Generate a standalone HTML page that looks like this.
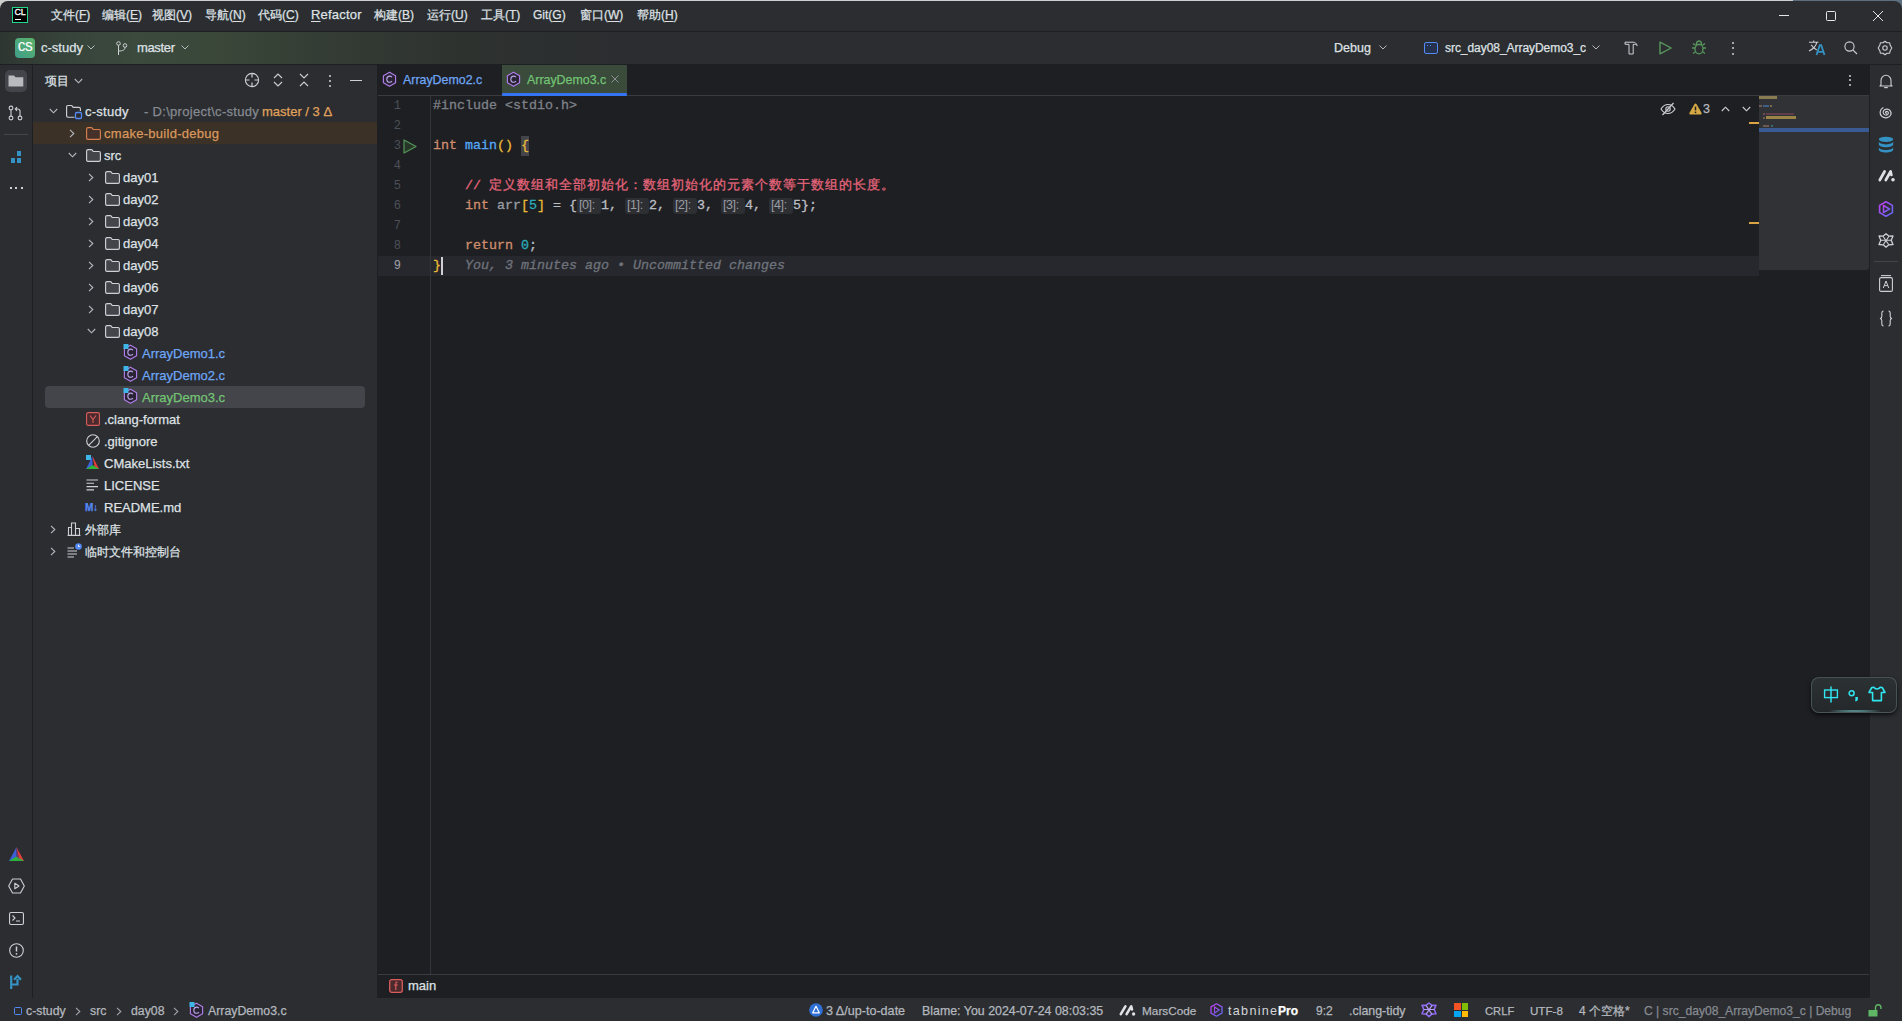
<!DOCTYPE html>
<html><head><meta charset="utf-8">
<style>
*{margin:0;padding:0;box-sizing:border-box}
html,body{width:1902px;height:1021px;overflow:hidden;background:#2b2d30;font-family:"Liberation Sans",sans-serif;color:#dfe1e5;font-size:13px}
.a{position:absolute}
.t{position:absolute;white-space:nowrap;line-height:22px;height:22px;-webkit-text-stroke:0.25px currentColor}
svg{position:absolute;overflow:visible}
#topline{left:0;top:0;width:1902px;height:8px;background:linear-gradient(90deg,#cfcfcf 0,#cfcfcf 1793px,#5d6e7e 1793px)}
#title{left:0;top:1px;width:1902px;height:30px;background:#2b2d30;border-top-left-radius:8px;border-top-right-radius:8px}
#tb{left:0;top:32px;width:1902px;height:32px;background:#2b2d30}
#tbgrad{left:0;top:32px;width:900px;height:32px;background:linear-gradient(90deg,#2f3631 0px,#36433a 60px,#3b4a3d 140px,#394638 230px,#333b34 340px,#2e322f 460px,#2b2d30 620px)}
.hl{background:#1e1f22}
#lstrip{left:0;top:65px;width:32px;height:933px;background:#2b2d30}
#proj{left:33px;top:65px;width:344px;height:933px;background:#2b2d30}
#editor{left:377px;top:65px;width:1492px;height:933px;background:#1e1f22}
#rstrip{left:1870px;top:65px;width:32px;height:933px;background:#2b2d30}
#status{left:0;top:998px;width:1902px;height:23px;background:#2b2d30}
.menu{top:4px;line-height:22px;font-size:12px;color:#dfe1e5}
.menu u{text-decoration:underline;text-underline-offset:2px}
.code{position:absolute;font-family:"Liberation Mono",monospace;font-size:13.33px;line-height:20px;white-space:pre;-webkit-text-stroke:0.3px currentColor}
.ln{position:absolute;font-family:"Liberation Mono",monospace;font-size:12px;line-height:20px;color:#4b5059;text-align:right;width:30px;left:371px}
</style></head><body>
<div class="a" id="topline"></div>
<div class="a" id="title"></div>
<div class="a hl" style="left:0;top:31px;width:1902px;height:1px"></div>
<div class="a" id="tb"></div>
<div class="a" id="tbgrad"></div>
<div class="a hl" style="left:0;top:64px;width:1902px;height:1px"></div>
<div class="a" id="lstrip"></div>
<div class="a hl" style="left:32px;top:65px;width:1px;height:933px"></div>
<div class="a" id="proj"></div>
<div class="a" id="editor"></div>
<div class="a hl" style="left:1869px;top:65px;width:1px;height:933px"></div>
<div class="a" id="rstrip"></div>
<div class="a" id="status"></div>

<!-- TITLE -->
<div id="titlec">
<div class="a" style="left:12px;top:7px;width:16px;height:16px;background:#000;border:1.5px solid #21d789"></div>
<div class="a" style="left:14.5px;top:7px;font:9px/11px 'Liberation Sans',sans-serif;color:#fff;letter-spacing:-0.2px;-webkit-text-stroke:0.3px #fff">CL</div>
<div class="a" style="left:15px;top:19px;width:6px;height:1px;background:#fff"></div>
<div class="t menu" style="left:51px">文件(<u>F</u>)</div>
<div class="t menu" style="left:102px">编辑(<u>E</u>)</div>
<div class="t menu" style="left:152px">视图(<u>V</u>)</div>
<div class="t menu" style="left:205px">导航(<u>N</u>)</div>
<div class="t menu" style="left:258px">代码(<u>C</u>)</div>
<div class="t menu" style="left:311px;font-size:13px;letter-spacing:0.2px"><u>R</u>efactor</div>
<div class="t menu" style="left:374px">构建(<u>B</u>)</div>
<div class="t menu" style="left:427px">运行(<u>U</u>)</div>
<div class="t menu" style="left:481px">工具(<u>T</u>)</div>
<div class="t menu" style="left:533px">Git(<u>G</u>)</div>
<div class="t menu" style="left:580px">窗口(<u>W</u>)</div>
<div class="t menu" style="left:637px">帮助(<u>H</u>)</div>
<div class="a" style="left:1779px;top:15px;width:10px;height:1px;background:#e6e6e6"></div>
<div class="a" style="left:1826px;top:11px;width:10px;height:10px;border:1px solid #e6e6e6;border-radius:1.5px"></div>
<svg style="left:1872px;top:10px" width="12" height="12" viewBox="0 0 12 12"><path d="M1 1L11 11M11 1L1 11" stroke="#e6e6e6" stroke-width="1"/></svg>
</div>
<!-- TOOLBAR -->
<div id="toolc">
<div class="a" style="left:15px;top:38px;width:20px;height:20px;border-radius:4px;background:linear-gradient(45deg,#3f9e8a,#5cb36a)"></div>
<div class="a" style="left:15px;top:38px;width:20px;height:20px;font:13px/20px 'Liberation Mono',monospace;color:#fff;text-align:center;letter-spacing:-0.6px;-webkit-text-stroke:0.2px #fff">CS</div>
<div class="t" style="left:41px;top:37px;color:#dfe1e5">c-study</div>
<svg style="left:87px;top:45px" width="8" height="5" viewBox="0 0 8 5"><path d="M0.5 0.5L4 4L7.5 0.5" fill="none" stroke="#b4b8bf" stroke-width="1"/></svg>
<svg style="left:116px;top:41px" width="12" height="15" viewBox="0 0 12 15"><circle cx="2.5" cy="2.5" r="1.8" fill="none" stroke="#ced0d6" stroke-width="1"/><circle cx="9" cy="4.5" r="1.8" fill="none" stroke="#ced0d6" stroke-width="1"/><path d="M2.5 4.3V14M9 6.3C9 9 7 10 2.5 10" fill="none" stroke="#ced0d6" stroke-width="1"/></svg>
<div class="t" style="left:137px;top:37px;color:#dfe1e5;letter-spacing:-0.35px">master</div>
<svg style="left:181px;top:45px" width="8" height="5" viewBox="0 0 8 5"><path d="M0.5 0.5L4 4L7.5 0.5" fill="none" stroke="#b4b8bf" stroke-width="1"/></svg>

<div class="t" style="left:1334px;top:37px;color:#dfe1e5;font-size:12.5px">Debug</div>
<svg style="left:1379px;top:45px" width="8" height="5" viewBox="0 0 8 5"><path d="M0.5 0.5L4 4L7.5 0.5" fill="none" stroke="#b4b8bf" stroke-width="1"/></svg>
<div class="a" style="left:1424px;top:42px;width:14px;height:12px;border:1.2px solid #548af7;border-radius:2px;background:#25324d"></div>
<div class="a" style="left:1427px;top:44.5px;width:1.2px;height:1.2px;background:#548af7"></div>
<div class="a" style="left:1429.5px;top:44.5px;width:1.2px;height:1.2px;background:#548af7"></div>
<div class="t" style="left:1445px;top:37px;color:#dfe1e5;font-size:12px;letter-spacing:-0.05px">src_day08_ArrayDemo3_c</div>
<svg style="left:1592px;top:45px" width="8" height="5" viewBox="0 0 8 5"><path d="M0.5 0.5L4 4L7.5 0.5" fill="none" stroke="#b4b8bf" stroke-width="1"/></svg>
<svg style="left:1624px;top:41px" width="14" height="14" viewBox="0 0 14 14"><path d="M1 1.2H9.2C11 1.2 12.6 2.4 13.2 4.6C12.2 3.6 11 3.3 10 3.3H9.2V13H5V3.3H1Z" fill="none" stroke="#ced0d6" stroke-width="1" stroke-linejoin="round"/></svg>
<svg style="left:1659px;top:41px" width="13" height="14" viewBox="0 0 13 14"><path d="M1 1.2V12.8L12.2 7Z" fill="none" stroke="#57965c" stroke-width="1.4" stroke-linejoin="round"/></svg>
<svg style="left:1691px;top:40px" width="16" height="15" viewBox="0 0 16 15"><ellipse cx="8" cy="9" rx="4" ry="4.8" fill="none" stroke="#57965c" stroke-width="1.3"/><path d="M5.3 4.6C5.5 2.4 6.5 1 8 1S10.5 2.4 10.7 4.6Z" fill="none" stroke="#57965c" stroke-width="1.3"/><path d="M4 8H1M12 8H15M4.4 5.2L2 3.4M11.6 5.2L14 3.4M4.4 11.8L2 13.6M11.6 11.8L14 13.6" stroke="#57965c" stroke-width="1.3"/></svg>
<div class="a" style="left:1732px;top:42px;width:2px;height:2px;background:#ced0d6;border-radius:1px"></div>
<div class="a" style="left:1732px;top:47px;width:2px;height:2px;background:#ced0d6;border-radius:1px"></div>
<div class="a" style="left:1732px;top:52.5px;width:2px;height:2px;background:#ced0d6;border-radius:1px"></div>
<svg style="left:1808px;top:40px" width="18" height="16" viewBox="0 0 18 16"><path d="M1 2.3H10.5M5.7 0.5V2.3M8.8 2.3C8 6 5 9 1 11M3.2 4.8C4.5 7.2 6.5 9 8.8 10" fill="none" stroke="#ced0d6" stroke-width="1.1"/><path d="M8.5 15L11.8 5.2H13.2L16.5 15M9.9 11.8H15.1" fill="none" stroke="#3592c4" stroke-width="1.8"/></svg>
<svg style="left:1844px;top:41px" width="14" height="14" viewBox="0 0 14 14"><circle cx="5.5" cy="5.5" r="4.6" fill="none" stroke="#ced0d6" stroke-width="1.1"/><path d="M8.8 8.8L13 13" stroke="#ced0d6" stroke-width="1.1"/></svg>
<svg style="left:1877px;top:40px" width="16" height="16" viewBox="0 0 16 16"><path d="M8 1.2L10 2.8L12.6 2.8L13.2 5.3L14.8 8L13.2 10.7L12.6 13.2L10 13.2L8 14.8L6 13.2L3.4 13.2L2.8 10.7L1.2 8L2.8 5.3L3.4 2.8L6 2.8Z" fill="none" stroke="#ced0d6" stroke-width="1.1" stroke-linejoin="round"/><circle cx="8" cy="8" r="2.2" fill="none" stroke="#ced0d6" stroke-width="1.1"/></svg>
</div>
<!-- LEFT STRIP -->
<div id="lsc">
<div class="a" style="left:5px;top:70px;width:22px;height:22px;border-radius:5px;background:#43454a"></div>
<svg style="left:8px;top:75px" width="16" height="12" viewBox="0 0 16 12"><path d="M0.5 0.5H6L7.5 2.2H15.3V11.5H0.5Z" fill="#b8babe"/></svg>
<svg style="left:8px;top:105px" width="16" height="16" viewBox="0 0 16 16"><circle cx="3" cy="3" r="1.9" fill="none" stroke="#ced0d6" stroke-width="1.1"/><circle cx="3" cy="13" r="1.9" fill="none" stroke="#ced0d6" stroke-width="1.1"/><circle cx="12" cy="13" r="1.9" fill="none" stroke="#ced0d6" stroke-width="1.1"/><path d="M3 4.9V11.1M12 11.1V6C12 4.5 11 4 9.5 4H7.5M9 2.2L7.3 4L9 5.8" fill="none" stroke="#ced0d6" stroke-width="1.1"/></svg>
<div class="a" style="left:4px;top:134px;width:24px;height:1px;background:#43454a"></div>
<div class="a" style="left:10.5px;top:158px;width:4.5px;height:4.5px;background:#3592c4"></div>
<div class="a" style="left:16.5px;top:158px;width:4.5px;height:4.5px;background:#3592c4"></div>
<div class="a" style="left:16.5px;top:151px;width:4.5px;height:4.5px;background:#3592c4"></div>
<div class="a" style="left:9.5px;top:187px;width:2px;height:2px;background:#ced0d6"></div>
<div class="a" style="left:15px;top:187px;width:2px;height:2px;background:#ced0d6"></div>
<div class="a" style="left:20.5px;top:187px;width:2px;height:2px;background:#ced0d6"></div>
<svg style="left:9px;top:847px" width="15" height="14" viewBox="0 0 15 14"><path d="M7.5 0L0 14H7.5Z" fill="#3c5fd6"/><path d="M7.5 0L15 14H10.5Z" fill="#e23b3b"/><path d="M0 14L7.5 9.5L15 14Z" fill="#2bb53a"/><path d="M7.5 0L7.5 9.5L10.5 14Z" fill="#8d3e8e" opacity="0.6"/></svg>
<svg style="left:8px;top:878px" width="17" height="16" viewBox="0 0 17 16"><path d="M4.5 1H12.5L16.3 8L12.5 15H4.5L0.7 8Z" fill="none" stroke="#ced0d6" stroke-width="1.1" stroke-linejoin="round"/><path d="M6.8 5.2V10.8L11 8Z" fill="none" stroke="#ced0d6" stroke-width="1.1" stroke-linejoin="round"/></svg>
<svg style="left:9px;top:912px" width="15" height="13" viewBox="0 0 15 13"><rect x="0.55" y="0.55" width="13.9" height="11.9" rx="1.5" fill="none" stroke="#ced0d6" stroke-width="1.1"/><path d="M3.5 3.5L6 6L3.5 8.5M7 9H11" fill="none" stroke="#ced0d6" stroke-width="1.1"/></svg>
<svg style="left:9px;top:943px" width="15" height="15" viewBox="0 0 15 15"><circle cx="7.5" cy="7.5" r="6.8" fill="none" stroke="#ced0d6" stroke-width="1.1"/><path d="M7.5 3.5V8.5" stroke="#ced0d6" stroke-width="1.5"/><circle cx="7.5" cy="10.8" r="0.9" fill="#ced0d6"/></svg>
<svg style="left:10px;top:975px" width="14" height="14" viewBox="0 0 14 14"><path d="M1.2 0.5V14M1.2 9.5H7.5V4" fill="none" stroke="#3592c4" stroke-width="2.2"/><path d="M4 4.8L7.5 1L11 4.8" fill="none" stroke="#3592c4" stroke-width="2.2"/></svg>
</div>
<!-- PROJECT -->
<div id="projc">
<div class="t" style="left:45px;top:70px;font-size:12px;color:#dfe1e5">项目</div>
<svg style="left:74px;top:78px" width="9" height="6" viewBox="0 0 9 6"><path d="M0.8 1L4.5 4.8L8.2 1" fill="none" stroke="#b4b8bf" stroke-width="1.1"/></svg>
<svg style="left:244px;top:72px" width="16" height="16" viewBox="0 0 16 16"><circle cx="8" cy="8" r="6.6" fill="none" stroke="#ced0d6" stroke-width="1.1"/><path d="M8 1.4V5.5M8 10.5V14.6M1.4 8H5.5M10.5 8H14.6" stroke="#ced0d6" stroke-width="1.2"/></svg>
<svg style="left:273px;top:73px" width="10" height="14" viewBox="0 0 10 14"><path d="M1 5L5 1L9 5M1 9L5 13L9 9" fill="none" stroke="#ced0d6" stroke-width="1.1"/></svg>
<svg style="left:299px;top:73px" width="10" height="14" viewBox="0 0 10 14"><path d="M1 1L5 5L9 1M1 13L5 9L9 13" fill="none" stroke="#ced0d6" stroke-width="1.1"/></svg>
<div class="a" style="left:329px;top:74.5px;width:2px;height:2px;border-radius:1px;background:#ced0d6"></div>
<div class="a" style="left:329px;top:79.5px;width:2px;height:2px;border-radius:1px;background:#ced0d6"></div>
<div class="a" style="left:329px;top:84.5px;width:2px;height:2px;border-radius:1px;background:#ced0d6"></div>
<div class="a" style="left:350px;top:79.5px;width:12px;height:1.2px;background:#ced0d6"></div>
<svg style="left:49px;top:108px" width="9" height="6" viewBox="0 0 9 6"><path d="M0.8 1L4.5 4.8L8.2 1" fill="none" stroke="#b4b8bf" stroke-width="1.1"/></svg>
<svg style="left:66px;top:104px" width="17" height="16" viewBox="0 0 17 16"><path d="M8.5 13.2H2C1.1 13.2 0.6 12.6 0.6 11.8V3C0.6 2.1 1.1 1.5 2 1.5H5.2C5.7 1.5 6 1.7 6.3 2.1L7.2 3.4H13C13.9 3.4 14.4 3.9 14.4 4.8V7" fill="none" stroke="#ced0d6" stroke-width="1.15"/><rect x="9.5" y="8.5" width="6" height="6" rx="1.2" fill="none" stroke="#548af7" stroke-width="1.3"/></svg>
<div class="t" style="left:85px;top:101px;color:#dfe1e5;letter-spacing:0.25px">c-study</div>
<div class="t" style="left:144px;top:101px;color:#868a91;letter-spacing:0.3px">- D:\project\c-study</div>
<div class="t" style="left:262px;top:101px;color:#e0a25c">master / 3 Δ</div>
<div class="a" style="left:33px;top:122px;width:344px;height:22px;background:#3b3126"></div>
<svg style="left:69px;top:129px" width="6" height="9" viewBox="0 0 6 9"><path d="M1 0.8L4.8 4.5L1 8.2" fill="none" stroke="#b4b8bf" stroke-width="1.1"/></svg>
<svg style="left:86px;top:127px" width="15" height="13" viewBox="0 0 15 13"><path d="M0.6 2.2C0.6 1.3 1.1 0.6 2 0.6H5.2C5.7 0.6 6 0.8 6.3 1.2L7.2 2.5H13C13.9 2.5 14.4 3 14.4 3.9V11C14.4 11.8 13.9 12.4 13 12.4H2C1.1 12.4 0.6 11.8 0.6 11Z" fill="#45302a" stroke="#d9804f" stroke-width="1.15"/></svg>
<div class="t" style="left:104px;top:123px;color:#d9975e;letter-spacing:0.28px">cmake-build-debug</div>
<svg style="left:68px;top:152px" width="9" height="6" viewBox="0 0 9 6"><path d="M0.8 1L4.5 4.8L8.2 1" fill="none" stroke="#b4b8bf" stroke-width="1.1"/></svg>
<svg style="left:86px;top:149px" width="15" height="13" viewBox="0 0 15 13"><path d="M0.6 2.2C0.6 1.3 1.1 0.6 2 0.6H5.2C5.7 0.6 6 0.8 6.3 1.2L7.2 2.5H13C13.9 2.5 14.4 3 14.4 3.9V11C14.4 11.8 13.9 12.4 13 12.4H2C1.1 12.4 0.6 11.8 0.6 11Z" fill="#43454a" stroke="#ced0d6" stroke-width="1.15"/></svg>
<div class="t" style="left:104px;top:145px;color:#dfe1e5">src</div>
<svg style="left:88px;top:173px" width="6" height="9" viewBox="0 0 6 9"><path d="M1 0.8L4.8 4.5L1 8.2" fill="none" stroke="#b4b8bf" stroke-width="1.1"/></svg>
<svg style="left:105px;top:171px" width="15" height="13" viewBox="0 0 15 13"><path d="M0.6 2.2C0.6 1.3 1.1 0.6 2 0.6H5.2C5.7 0.6 6 0.8 6.3 1.2L7.2 2.5H13C13.9 2.5 14.4 3 14.4 3.9V11C14.4 11.8 13.9 12.4 13 12.4H2C1.1 12.4 0.6 11.8 0.6 11Z" fill="#43454a" stroke="#ced0d6" stroke-width="1.15"/></svg>
<div class="t" style="left:123px;top:167px;color:#dfe1e5">day01</div>
<svg style="left:88px;top:195px" width="6" height="9" viewBox="0 0 6 9"><path d="M1 0.8L4.8 4.5L1 8.2" fill="none" stroke="#b4b8bf" stroke-width="1.1"/></svg>
<svg style="left:105px;top:193px" width="15" height="13" viewBox="0 0 15 13"><path d="M0.6 2.2C0.6 1.3 1.1 0.6 2 0.6H5.2C5.7 0.6 6 0.8 6.3 1.2L7.2 2.5H13C13.9 2.5 14.4 3 14.4 3.9V11C14.4 11.8 13.9 12.4 13 12.4H2C1.1 12.4 0.6 11.8 0.6 11Z" fill="#43454a" stroke="#ced0d6" stroke-width="1.15"/></svg>
<div class="t" style="left:123px;top:189px;color:#dfe1e5">day02</div>
<svg style="left:88px;top:217px" width="6" height="9" viewBox="0 0 6 9"><path d="M1 0.8L4.8 4.5L1 8.2" fill="none" stroke="#b4b8bf" stroke-width="1.1"/></svg>
<svg style="left:105px;top:215px" width="15" height="13" viewBox="0 0 15 13"><path d="M0.6 2.2C0.6 1.3 1.1 0.6 2 0.6H5.2C5.7 0.6 6 0.8 6.3 1.2L7.2 2.5H13C13.9 2.5 14.4 3 14.4 3.9V11C14.4 11.8 13.9 12.4 13 12.4H2C1.1 12.4 0.6 11.8 0.6 11Z" fill="#43454a" stroke="#ced0d6" stroke-width="1.15"/></svg>
<div class="t" style="left:123px;top:211px;color:#dfe1e5">day03</div>
<svg style="left:88px;top:239px" width="6" height="9" viewBox="0 0 6 9"><path d="M1 0.8L4.8 4.5L1 8.2" fill="none" stroke="#b4b8bf" stroke-width="1.1"/></svg>
<svg style="left:105px;top:237px" width="15" height="13" viewBox="0 0 15 13"><path d="M0.6 2.2C0.6 1.3 1.1 0.6 2 0.6H5.2C5.7 0.6 6 0.8 6.3 1.2L7.2 2.5H13C13.9 2.5 14.4 3 14.4 3.9V11C14.4 11.8 13.9 12.4 13 12.4H2C1.1 12.4 0.6 11.8 0.6 11Z" fill="#43454a" stroke="#ced0d6" stroke-width="1.15"/></svg>
<div class="t" style="left:123px;top:233px;color:#dfe1e5">day04</div>
<svg style="left:88px;top:261px" width="6" height="9" viewBox="0 0 6 9"><path d="M1 0.8L4.8 4.5L1 8.2" fill="none" stroke="#b4b8bf" stroke-width="1.1"/></svg>
<svg style="left:105px;top:259px" width="15" height="13" viewBox="0 0 15 13"><path d="M0.6 2.2C0.6 1.3 1.1 0.6 2 0.6H5.2C5.7 0.6 6 0.8 6.3 1.2L7.2 2.5H13C13.9 2.5 14.4 3 14.4 3.9V11C14.4 11.8 13.9 12.4 13 12.4H2C1.1 12.4 0.6 11.8 0.6 11Z" fill="#43454a" stroke="#ced0d6" stroke-width="1.15"/></svg>
<div class="t" style="left:123px;top:255px;color:#dfe1e5">day05</div>
<svg style="left:88px;top:283px" width="6" height="9" viewBox="0 0 6 9"><path d="M1 0.8L4.8 4.5L1 8.2" fill="none" stroke="#b4b8bf" stroke-width="1.1"/></svg>
<svg style="left:105px;top:281px" width="15" height="13" viewBox="0 0 15 13"><path d="M0.6 2.2C0.6 1.3 1.1 0.6 2 0.6H5.2C5.7 0.6 6 0.8 6.3 1.2L7.2 2.5H13C13.9 2.5 14.4 3 14.4 3.9V11C14.4 11.8 13.9 12.4 13 12.4H2C1.1 12.4 0.6 11.8 0.6 11Z" fill="#43454a" stroke="#ced0d6" stroke-width="1.15"/></svg>
<div class="t" style="left:123px;top:277px;color:#dfe1e5">day06</div>
<svg style="left:88px;top:305px" width="6" height="9" viewBox="0 0 6 9"><path d="M1 0.8L4.8 4.5L1 8.2" fill="none" stroke="#b4b8bf" stroke-width="1.1"/></svg>
<svg style="left:105px;top:303px" width="15" height="13" viewBox="0 0 15 13"><path d="M0.6 2.2C0.6 1.3 1.1 0.6 2 0.6H5.2C5.7 0.6 6 0.8 6.3 1.2L7.2 2.5H13C13.9 2.5 14.4 3 14.4 3.9V11C14.4 11.8 13.9 12.4 13 12.4H2C1.1 12.4 0.6 11.8 0.6 11Z" fill="#43454a" stroke="#ced0d6" stroke-width="1.15"/></svg>
<div class="t" style="left:123px;top:299px;color:#dfe1e5">day07</div>
<svg style="left:87px;top:328px" width="9" height="6" viewBox="0 0 9 6"><path d="M0.8 1L4.5 4.8L8.2 1" fill="none" stroke="#b4b8bf" stroke-width="1.1"/></svg>
<svg style="left:105px;top:325px" width="15" height="13" viewBox="0 0 15 13"><path d="M0.6 2.2C0.6 1.3 1.1 0.6 2 0.6H5.2C5.7 0.6 6 0.8 6.3 1.2L7.2 2.5H13C13.9 2.5 14.4 3 14.4 3.9V11C14.4 11.8 13.9 12.4 13 12.4H2C1.1 12.4 0.6 11.8 0.6 11Z" fill="#43454a" stroke="#ced0d6" stroke-width="1.15"/></svg>
<div class="t" style="left:123px;top:321px;color:#dfe1e5">day08</div>
<svg style="left:123px;top:344px" width="15" height="17" viewBox="0 0 15 17"><path d="M7.5 1.2L13.6 4.7V11.8L7.5 15.3L1.4 11.8V4.7Z" fill="#2a2336" stroke="#b07ee8" stroke-width="1.15" stroke-linejoin="round"/><path d="M9.9 6.3C9.4 5.5 8.6 5.1 7.6 5.1C6 5.1 4.8 6.4 4.8 8.2C4.8 10 6 11.3 7.6 11.3C8.6 11.3 9.4 10.9 9.9 10.1" fill="none" stroke="#b9a6e3" stroke-width="1.1"/><rect x="0.5" y="0" width="5" height="5" fill="#3fb6e8"/></svg>
<div class="t" style="left:142px;top:343px;color:#6ea6f5">ArrayDemo1.c</div>
<svg style="left:123px;top:366px" width="15" height="17" viewBox="0 0 15 17"><path d="M7.5 1.2L13.6 4.7V11.8L7.5 15.3L1.4 11.8V4.7Z" fill="#2a2336" stroke="#b07ee8" stroke-width="1.15" stroke-linejoin="round"/><path d="M9.9 6.3C9.4 5.5 8.6 5.1 7.6 5.1C6 5.1 4.8 6.4 4.8 8.2C4.8 10 6 11.3 7.6 11.3C8.6 11.3 9.4 10.9 9.9 10.1" fill="none" stroke="#b9a6e3" stroke-width="1.1"/><rect x="0.5" y="0" width="5" height="5" fill="#3fb6e8"/></svg>
<div class="t" style="left:142px;top:365px;color:#6ea6f5">ArrayDemo2.c</div>
<div class="a" style="left:45px;top:386px;width:320px;height:22px;border-radius:4px;background:#43454a"></div>
<svg style="left:123px;top:388px" width="15" height="17" viewBox="0 0 15 17"><path d="M7.5 1.2L13.6 4.7V11.8L7.5 15.3L1.4 11.8V4.7Z" fill="#2a2336" stroke="#b07ee8" stroke-width="1.15" stroke-linejoin="round"/><path d="M9.9 6.3C9.4 5.5 8.6 5.1 7.6 5.1C6 5.1 4.8 6.4 4.8 8.2C4.8 10 6 11.3 7.6 11.3C8.6 11.3 9.4 10.9 9.9 10.1" fill="none" stroke="#b9a6e3" stroke-width="1.1"/><rect x="0.5" y="0" width="5" height="5" fill="#3fb6e8"/></svg>
<div class="t" style="left:142px;top:387px;color:#73c374">ArrayDemo3.c</div>
<svg style="left:86px;top:412px" width="14" height="14" viewBox="0 0 14 14"><rect x="0.6" y="0.6" width="12.8" height="12.8" rx="1.5" fill="#4a2a2c" stroke="#db5c5c" stroke-width="1.1"/><path d="M4 3.5L7 7.5L10 3.5M7 7.5V11" fill="none" stroke="#db5c5c" stroke-width="1.1"/></svg>
<div class="t" style="left:104px;top:409px;color:#dfe1e5">.clang-format</div>
<svg style="left:86px;top:434px" width="14" height="14" viewBox="0 0 14 14"><circle cx="7" cy="7" r="6.3" fill="none" stroke="#ced0d6" stroke-width="1.1"/><path d="M2.6 11.4L11.4 2.6" stroke="#ced0d6" stroke-width="1.1"/></svg>
<div class="t" style="left:104px;top:431px;color:#dfe1e5">.gitignore</div>
<svg style="left:85px;top:455px" width="15" height="15" viewBox="0 0 15 15"><path d="M7.5 1L1 14H7.5Z" fill="#3c5fd6"/><path d="M7.5 1L14 14H10Z" fill="#e23b3b"/><path d="M1 14L7.5 10L14 14Z" fill="#2bb53a"/><rect x="1" y="0" width="5" height="5" fill="#3fb6e8"/></svg>
<div class="t" style="left:104px;top:453px;color:#dfe1e5">CMakeLists.txt</div>
<svg style="left:86px;top:479px" width="13" height="12" viewBox="0 0 13 12"><path d="M0.5 1H12M0.5 4.3H8M0.5 7.6H12M0.5 10.9H8" stroke="#ced0d6" stroke-width="1.1"/></svg>
<div class="t" style="left:104px;top:475px;color:#dfe1e5">LICENSE</div>
<div class="t" style="left:85px;top:497px;color:#548af7;font-weight:bold;font-size:10px;letter-spacing:-0.3px">M↓</div>
<div class="t" style="left:104px;top:497px;color:#dfe1e5">README.md</div>
<svg style="left:50px;top:525px" width="6" height="9" viewBox="0 0 6 9"><path d="M1 0.8L4.8 4.5L1 8.2" fill="none" stroke="#b4b8bf" stroke-width="1.1"/></svg>
<svg style="left:67px;top:522px" width="14" height="14" viewBox="0 0 14 14"><path d="M0.6 13.4H13.4M1.5 13V5.5H4.5V13M4.5 13V1H8.5V13M8.5 13V6.5H12.5V13" fill="none" stroke="#ced0d6" stroke-width="1.1"/></svg>
<div class="t" style="left:85px;top:519px;color:#dfe1e5;font-size:12px">外部库</div>
<svg style="left:50px;top:547px" width="6" height="9" viewBox="0 0 6 9"><path d="M1 0.8L4.8 4.5L1 8.2" fill="none" stroke="#b4b8bf" stroke-width="1.1"/></svg>
<svg style="left:67px;top:543px" width="15" height="15" viewBox="0 0 15 15"><path d="M0.5 5H7M0.5 8H10M0.5 11H10M0.5 14H7" stroke="#ced0d6" stroke-width="1.1"/><circle cx="11.5" cy="3.5" r="3.3" fill="#548af7"/><path d="M11.5 1.8V3.6H12.8" fill="none" stroke="#fff" stroke-width="0.9"/></svg>
<div class="t" style="left:85px;top:541px;color:#dfe1e5;font-size:12px">临时文件和控制台</div>
</div>
<!-- EDITOR -->
<div id="edc">
<div class="a" style="left:378px;top:95px;width:1491px;height:1px;background:#393b40"></div>
<svg style="left:382px;top:71px" width="15" height="17" viewBox="0 0 15 17"><path d="M7.5 1.2L13.6 4.7V11.8L7.5 15.3L1.4 11.8V4.7Z" fill="#2a2336" stroke="#b07ee8" stroke-width="1.15" stroke-linejoin="round"/><path d="M9.9 6.3C9.4 5.5 8.6 5.1 7.6 5.1C6 5.1 4.8 6.4 4.8 8.2C4.8 10 6 11.3 7.6 11.3C8.6 11.3 9.4 10.9 9.9 10.1" fill="none" stroke="#b9a6e3" stroke-width="1.1"/></svg>
<div class="t" style="left:403px;top:69px;font-size:12.4px;color:#6ea6f5">ArrayDemo2.c</div>
<div class="a" style="left:502px;top:65px;width:125px;height:31px;background:#3a4a3b"></div>
<div class="a" style="left:502px;top:93px;width:125px;height:3px;background:#3574f0;border-radius:1px"></div>
<svg style="left:506px;top:71px" width="15" height="17" viewBox="0 0 15 17"><path d="M7.5 1.2L13.6 4.7V11.8L7.5 15.3L1.4 11.8V4.7Z" fill="#2a2336" stroke="#b07ee8" stroke-width="1.15" stroke-linejoin="round"/><path d="M9.9 6.3C9.4 5.5 8.6 5.1 7.6 5.1C6 5.1 4.8 6.4 4.8 8.2C4.8 10 6 11.3 7.6 11.3C8.6 11.3 9.4 10.9 9.9 10.1" fill="none" stroke="#b9a6e3" stroke-width="1.1"/></svg>
<div class="t" style="left:527px;top:69px;font-size:12.4px;color:#73c374">ArrayDemo3.c</div>
<svg style="left:611px;top:75px" width="8" height="8" viewBox="0 0 8 8"><path d="M0.5 0.5L7.5 7.5M7.5 0.5L0.5 7.5" stroke="#8c8f94" stroke-width="1"/></svg>
<div class="a" style="left:1849px;top:74.5px;width:2px;height:2px;border-radius:1px;background:#ced0d6"></div>
<div class="a" style="left:1849px;top:79px;width:2px;height:2px;border-radius:1px;background:#ced0d6"></div>
<div class="a" style="left:1849px;top:83.5px;width:2px;height:2px;border-radius:1px;background:#ced0d6"></div>
<div class="a" style="left:378px;top:256px;width:1381px;height:20px;background:#26282e"></div>
<div class="a" style="left:430px;top:96px;width:1px;height:878px;background:#313438"></div>
<div class="ln" style="top:96px;color:#4b5059">1</div>
<div class="ln" style="top:116px;color:#4b5059">2</div>
<div class="ln" style="top:136px;color:#4b5059">3</div>
<div class="ln" style="top:156px;color:#4b5059">4</div>
<div class="ln" style="top:176px;color:#4b5059">5</div>
<div class="ln" style="top:196px;color:#4b5059">6</div>
<div class="ln" style="top:216px;color:#4b5059">7</div>
<div class="ln" style="top:236px;color:#4b5059">8</div>
<div class="ln" style="top:256px;color:#a1a3ab">9</div>
<svg style="left:403px;top:139px" width="14" height="15" viewBox="0 0 14 15"><path d="M1 1V14L13 7.5Z" fill="#253627" stroke="#57965c" stroke-width="1.2" stroke-linejoin="round"/></svg>
<div class="a" style="left:521px;top:136px;width:8px;height:20px;background:#43454a"></div>
<div class="code" style="left:433px;top:96px"><span style="color:#7e8289">#include &lt;stdio.h&gt;</span></div>
<div class="code" style="left:433px;top:136px"><span style="color:#cf8e6d">int</span><span style="color:#bcbec4"> </span><span style="color:#56a8f5">main</span><span style="color:#e8ba36">()</span><span style="color:#bcbec4"> </span><span style="color:#e8ba36">{</span></div>
<div class="code" style="left:465px;top:176px;color:#e3647a">// <span style="letter-spacing:1.0px;font-size:12.5px">定义数组和全部初始化：数组初始化的元素个数等于数组的长度。</span></div>
<div class="code" style="left:465px;top:196px"><span style="color:#cf8e6d">int</span><span style="color:#bcbec4"> </span><span style="color:#9a9ea6">arr</span><span style="color:#e8ba36">[</span><span style="color:#2aacb8">5</span><span style="color:#e8ba36">]</span><span style="color:#bcbec4"> = </span><span style="color:#bcbec4">{</span></div>
<div class="a" style="left:577px;top:198px;width:24px;height:16px;border-radius:3px;background:#2d2f33"></div>
<div class="a" style="left:579px;top:195.5px;font:12.5px/18px 'Liberation Sans',sans-serif;color:#9a9da4;letter-spacing:-0.4px">[0]:</div>
<div class="code" style="left:601px;top:196px"><span style="color:#bcbec4">1</span><span style="color:#bcbec4">, </span></div>
<div class="a" style="left:625px;top:198px;width:24px;height:16px;border-radius:3px;background:#2d2f33"></div>
<div class="a" style="left:627px;top:195.5px;font:12.5px/18px 'Liberation Sans',sans-serif;color:#9a9da4;letter-spacing:-0.4px">[1]:</div>
<div class="code" style="left:649px;top:196px"><span style="color:#bcbec4">2</span><span style="color:#bcbec4">, </span></div>
<div class="a" style="left:673px;top:198px;width:24px;height:16px;border-radius:3px;background:#2d2f33"></div>
<div class="a" style="left:675px;top:195.5px;font:12.5px/18px 'Liberation Sans',sans-serif;color:#9a9da4;letter-spacing:-0.4px">[2]:</div>
<div class="code" style="left:697px;top:196px"><span style="color:#bcbec4">3</span><span style="color:#bcbec4">, </span></div>
<div class="a" style="left:721px;top:198px;width:24px;height:16px;border-radius:3px;background:#2d2f33"></div>
<div class="a" style="left:723px;top:195.5px;font:12.5px/18px 'Liberation Sans',sans-serif;color:#9a9da4;letter-spacing:-0.4px">[3]:</div>
<div class="code" style="left:745px;top:196px"><span style="color:#bcbec4">4</span><span style="color:#bcbec4">, </span></div>
<div class="a" style="left:769px;top:198px;width:24px;height:16px;border-radius:3px;background:#2d2f33"></div>
<div class="a" style="left:771px;top:195.5px;font:12.5px/18px 'Liberation Sans',sans-serif;color:#9a9da4;letter-spacing:-0.4px">[4]:</div>
<div class="code" style="left:793px;top:196px"><span style="color:#bcbec4">5</span><span style="color:#bcbec4">}</span><span style="color:#bcbec4">;</span></div>
<div class="code" style="left:465px;top:236px"><span style="color:#cf8e6d">return</span><span style="color:#bcbec4"> </span><span style="color:#2aacb8">0</span><span style="color:#bcbec4">;</span></div>
<div class="code" style="left:433px;top:256px"><span style="color:#e8ba36">}</span></div>
<div class="a" style="left:441px;top:257px;width:2px;height:18px;background:#ced0d6"></div>
<div class="code" style="left:465px;top:256px;color:#6f737a;font-style:italic">You, 3 minutes ago • Uncommitted changes</div>
</div>
<!-- RIGHT STRIP -->
<div id="rsc">
<svg style="left:1660px;top:102px" width="16" height="14" viewBox="0 0 16 14"><path d="M1 7C2.8 4 5.2 2.5 8 2.5S13.2 4 15 7C13.2 10 10.8 11.5 8 11.5S2.8 10 1 7Z" fill="none" stroke="#ced0d6" stroke-width="1.1"/><circle cx="8" cy="7" r="2.2" fill="none" stroke="#ced0d6" stroke-width="1.1"/><path d="M2.5 13L13.5 1" stroke="#ced0d6" stroke-width="1.2"/></svg>
<svg style="left:1688.5px;top:103px" width="13" height="12" viewBox="0 0 13 12"><path d="M5.4 1.2C5.9 0.3 7.1 0.3 7.6 1.2L12.5 9.8C13 10.7 12.4 11.6 11.4 11.6H1.6C0.6 11.6 0 10.7 0.5 9.8Z" fill="#d6a844"/><path d="M6.5 3.6V7.4" stroke="#1e1f22" stroke-width="1.5"/><rect x="5.75" y="8.6" width="1.5" height="1.5" fill="#1e1f22"/></svg>
<div class="t" style="left:1703px;top:98px;font-size:12.5px;color:#b4b8bf">3</div>
<svg style="left:1721px;top:106px" width="9" height="6" viewBox="0 0 9 6"><path d="M0.8 5L4.5 1.2L8.2 5" fill="none" stroke="#ced0d6" stroke-width="1.1"/></svg>
<svg style="left:1742px;top:106px" width="9" height="6" viewBox="0 0 9 6"><path d="M0.8 1L4.5 4.8L8.2 1" fill="none" stroke="#ced0d6" stroke-width="1.1"/></svg>
<div class="a" style="left:1749px;top:122px;width:10px;height:2px;background:#d9a441"></div>
<div class="a" style="left:1749px;top:222px;width:10px;height:2px;background:#d9a441"></div>
<div class="a" style="left:1759px;top:96px;width:110px;height:174px;background:#313236;border-bottom-right-radius:3px"></div>
<div class="a" style="left:1759px;top:96px;width:18px;height:3px;background:#8a7c52"></div>
<div class="a" style="left:1759px;top:105px;width:3px;height:2px;background:#6e5a50"></div>
<div class="a" style="left:1763px;top:105px;width:6px;height:2px;background:#3f5f87"></div>
<div class="a" style="left:1770px;top:105px;width:2px;height:2px;background:#7a6c44"></div>
<div class="a" style="left:1763px;top:113px;width:2px;height:2px;background:#6e4a55"></div>
<div class="a" style="left:1766px;top:113px;width:28px;height:2px;background:#5f3d48"></div>
<div class="a" style="left:1763px;top:117px;width:2px;height:2px;background:#6e5a50"></div>
<div class="a" style="left:1766px;top:116px;width:30px;height:3px;background:#9a8448"></div>
<div class="a" style="left:1763px;top:125px;width:6px;height:2px;background:#6e5a50"></div>
<div class="a" style="left:1771px;top:125px;width:2px;height:2px;background:#3a6a78"></div>
<div class="a" style="left:1759px;top:128px;width:110px;height:4px;background:#3a5a94"></div>
<svg style="left:1879px;top:74px" width="14" height="15" viewBox="0 0 14 15"><path d="M2 11V6.5C2 3.5 4.2 1.3 7 1.3S12 3.5 12 6.5V11L13 12H1Z" fill="none" stroke="#ced0d6" stroke-width="1.1" stroke-linejoin="round"/><path d="M5.2 13.6H8.8" stroke="#ced0d6" stroke-width="1.2"/></svg>
<svg style="left:1879px;top:106px" width="15" height="14" viewBox="0 0 15 14"><path d="M7.5 7.2C6.6 7.2 6.3 6.3 6.8 5.7C7.6 4.9 9.4 5.4 9.4 7C9.4 9 6.7 9.7 5.1 8.4C3.3 6.9 4 3.4 7.5 3.2C11 3 12.6 6 11.8 8.6C10.8 11.7 6 12.8 3 10.6C0.2 8.5 0.5 3.5 4 1.7" fill="none" stroke="#ced0d6" stroke-width="1.2" stroke-linecap="round"/></svg>
<svg style="left:1878px;top:136px" width="16" height="17" viewBox="0 0 16 17"><ellipse cx="8" cy="3.3" rx="7.2" ry="2.6" fill="#3592c4"/><path d="M0.8 5.6C0.8 7.2 4 8.4 8 8.4S15.2 7.2 15.2 5.6V8.4C15.2 10 12 11.2 8 11.2S0.8 10 0.8 8.4Z" fill="#3592c4"/><path d="M0.8 11.2C0.8 12.8 4 14 8 14S15.2 12.8 15.2 11.2V13.8C15.2 15.4 12 16.6 8 16.6S0.8 15.4 0.8 13.8Z" fill="#3592c4"/></svg>
<svg style="left:1878px;top:169px" width="17" height="13" viewBox="0 0 17 13"><path d="M1.8 11L6.6 2.5M7.8 11L12.6 2.5L13.4 6" stroke="#dfe1e5" stroke-width="2.7" stroke-linecap="round" stroke-linejoin="round" fill="none"/><circle cx="15" cy="10.8" r="1.8" fill="#dfe1e5"/></svg>
<svg style="left:1878px;top:201px" width="16" height="16" viewBox="0 0 16 16"><defs><linearGradient id="tn" x1="0" y1="0" x2="1" y2="1"><stop offset="0" stop-color="#c040f0"/><stop offset="1" stop-color="#5b6cf5"/></linearGradient></defs><path d="M8 0.8L14.4 4.4V11.6L8 15.2L1.6 11.6V4.4Z" fill="none" stroke="url(#tn)" stroke-width="1.6" stroke-linejoin="round"/><path d="M5.5 4.5L11.5 8L5.5 11.5Z" fill="none" stroke="url(#tn)" stroke-width="1.5" stroke-linejoin="round"/></svg>
<svg style="left:1878px;top:233px" width="16" height="15" viewBox="0 0 16 15"><path d="M8 0.8L11 3.2L15 3L13.2 7.2L15 11.5L10.8 11.8L8 14.2L5.2 11.8L1 11.5L2.8 7.2L1 3L5 3.2Z" fill="none" stroke="#ced0d6" stroke-width="1.3" stroke-linejoin="round"/><path d="M5 3.2L10.8 11.8M11 3.2L5.2 11.8M2.8 7.2H13.2" stroke="#ced0d6" stroke-width="1.1"/></svg>
<div class="a" style="left:1874px;top:261px;width:24px;height:1px;background:#43454a"></div>
<svg style="left:1879px;top:275px" width="14" height="17" viewBox="0 0 14 17"><rect x="0.6" y="2.6" width="12.8" height="13.8" rx="1.5" fill="none" stroke="#ced0d6" stroke-width="1.1"/><path d="M2 0.6H12" stroke="#ced0d6" stroke-width="1.1"/><path d="M4.3 13L7 6L9.7 13M5.3 10.6H8.7" fill="none" stroke="#ced0d6" stroke-width="1"/></svg>
<svg style="left:1879px;top:310px" width="14" height="17" viewBox="0 0 14 17"><path d="M4.5 1C3 1 2.8 2 2.8 3.5V6.5C2.8 7.6 2.2 8.3 1 8.5C2.2 8.7 2.8 9.4 2.8 10.5V13.5C2.8 15 3 16 4.5 16M9.5 1C11 1 11.2 2 11.2 3.5V6.5C11.2 7.6 11.8 8.3 13 8.5C11.8 8.7 11.2 9.4 11.2 10.5V13.5C11.2 15 11 16 9.5 16" fill="none" stroke="#ced0d6" stroke-width="1.1"/></svg>
<div class="a" style="left:378px;top:974px;width:1491px;height:1px;background:#393b40"></div>
<svg style="left:389px;top:979px" width="14" height="14" viewBox="0 0 14 14"><rect x="0.7" y="0.7" width="12.6" height="12.6" rx="2" fill="#4a2a2c" stroke="#db5c5c" stroke-width="1.3"/><path d="M8.6 3.4C8.2 3 7.6 3 7.2 3.3C6.8 3.6 6.8 4.2 6.8 5V11M5 6H8.8" fill="none" stroke="#db5c5c" stroke-width="1.2"/></svg>
<div class="t" style="left:408px;top:975px;color:#dfe1e5">main</div>
<div class="a" style="left:1811px;top:677px;width:86px;height:36px;border-radius:8px;background:linear-gradient(#2c3133,#24282a);border:1px solid rgba(110,130,132,0.45);box-shadow:0 2px 4px rgba(0,0,0,0.7)"></div>
<div class="a" style="left:1825px;top:710px;width:60px;height:2px;background:radial-gradient(ellipse 30px 1px at 30px 1px,rgba(140,240,245,0.9),rgba(60,200,210,0) 100%)"></div>
<svg style="left:1823px;top:686px" width="16" height="17" viewBox="0 0 16 17"><rect x="1.6" y="4" width="12.8" height="7.6" fill="none" stroke="#2fe5f0" stroke-width="1.4"/><path d="M8 0.5V16.5" stroke="#2fe5f0" stroke-width="1.5"/></svg>
<svg style="left:1848px;top:689px" width="12" height="13" viewBox="0 0 12 13"><circle cx="3.6" cy="4.2" r="2.5" fill="none" stroke="#2fe5f0" stroke-width="1.5"/><path d="M7.4 8.5H9.3V10C9.3 11 8.5 11.8 7.4 12" fill="#2fe5f0" stroke="#2fe5f0" stroke-width="1.2"/></svg>
<svg style="left:1868px;top:686px" width="18" height="16" viewBox="0 0 18 16"><path d="M5.8 1.2L3.8 1.5L1 6.5H4.6V14.6H13.4V6.5H17L14.2 1.5L12.2 1.2C11.5 2.4 10.2 3 9 3S6.5 2.4 5.8 1.2Z" fill="none" stroke="#2fe5f0" stroke-width="1.6" stroke-linejoin="round"/></svg></div>
<!-- STATUS -->
<div id="stc">
<div class="a" style="left:14px;top:1007px;width:8px;height:8px;border:1.3px solid #548af7;border-radius:1.5px"></div>
<div class="t" style="left:26px;font-size:12.3px;color:#b4b8bf;top:1001px;line-height:20px;height:20px">c-study</div>
<svg style="left:75px;top:1007px" width="6" height="9" viewBox="0 0 6 9"><path d="M1 0.8L4.8 4.5L1 8.2" fill="none" stroke="#a1a3ab" stroke-width="1.1"/></svg>
<div class="t" style="left:90px;font-size:12.3px;color:#b4b8bf;top:1001px;line-height:20px;height:20px">src</div>
<svg style="left:116px;top:1007px" width="6" height="9" viewBox="0 0 6 9"><path d="M1 0.8L4.8 4.5L1 8.2" fill="none" stroke="#a1a3ab" stroke-width="1.1"/></svg>
<div class="t" style="left:131px;font-size:12.3px;color:#b4b8bf;top:1001px;line-height:20px;height:20px">day08</div>
<svg style="left:173px;top:1007px" width="6" height="9" viewBox="0 0 6 9"><path d="M1 0.8L4.8 4.5L1 8.2" fill="none" stroke="#a1a3ab" stroke-width="1.1"/></svg>
<svg style="left:189px;top:1002px" width="15" height="17" viewBox="0 0 15 17"><path d="M7.5 1.2L13.6 4.7V11.8L7.5 15.3L1.4 11.8V4.7Z" fill="#2a2336" stroke="#b07ee8" stroke-width="1.15" stroke-linejoin="round"/><path d="M9.9 6.3C9.4 5.5 8.6 5.1 7.6 5.1C6 5.1 4.8 6.4 4.8 8.2C4.8 10 6 11.3 7.6 11.3C8.6 11.3 9.4 10.9 9.9 10.1" fill="none" stroke="#b9a6e3" stroke-width="1.1"/><rect x="0.5" y="0" width="5" height="5" fill="#3fb6e8"/></svg>
<div class="t" style="left:208px;font-size:12.3px;color:#b4b8bf;top:1001px;line-height:20px;height:20px">ArrayDemo3.c</div>
<svg style="left:809px;top:1003px" width="14" height="14" viewBox="0 0 14 14"><circle cx="7" cy="7" r="6.8" fill="#2f6fd6"/><path d="M7 3.3L10.3 9.8H3.7Z" fill="none" stroke="#fff" stroke-width="1.2" stroke-linejoin="round"/></svg>
<div class="t" style="left:826px;font-size:12.3px;color:#b4b8bf;top:1001px;line-height:20px;height:20px;font-size:12.6px">3 Δ/up-to-date</div>
<div class="t" style="left:922px;font-size:12.3px;color:#b4b8bf;top:1001px;line-height:20px;height:20px;font-size:12.4px">Blame: You 2024-07-24 08:03:35</div>
<svg style="left:1119px;top:1004px" width="17" height="12" viewBox="0 0 17 12"><path d="M1.8 10.2L6.4 2.3M7.6 10.2L12.2 2.3L13 5.5" stroke="#dfe1e5" stroke-width="2.6" stroke-linecap="round" stroke-linejoin="round" fill="none"/><circle cx="14.6" cy="10" r="1.7" fill="#dfe1e5"/></svg>
<div class="t" style="left:1142px;font-size:12.3px;color:#b4b8bf;top:1001px;line-height:20px;height:20px;font-size:11.8px">MarsCode</div>
<svg style="left:1210px;top:1003px" width="13" height="14" viewBox="0 0 13 14"><defs><linearGradient id="tn2" x1="0" y1="0" x2="1" y2="1"><stop offset="0" stop-color="#c040f0"/><stop offset="1" stop-color="#5b6cf5"/></linearGradient></defs><path d="M6.5 0.8L12 3.9V10.1L6.5 13.2L1 10.1V3.9Z" fill="none" stroke="url(#tn2)" stroke-width="1.3" stroke-linejoin="round"/><path d="M4.5 4L9.3 7L4.5 10Z" fill="none" stroke="url(#tn2)" stroke-width="1.1"/></svg>
<div class="t" style="left:1228px;font-size:12.3px;color:#b4b8bf;top:1001px;line-height:20px;height:20px;font-size:12.6px;color:#d4d6da;letter-spacing:1.3px;-webkit-text-stroke:0">tabnine</div>
<div class="t" style="left:1278px;font-size:12.3px;color:#b4b8bf;top:1001px;line-height:20px;height:20px;font-size:12px;font-weight:bold;color:#ffffff">Pro</div>
<div class="t" style="left:1316px;font-size:12.3px;color:#b4b8bf;top:1001px;line-height:20px;height:20px;font-size:12px">9:2</div>
<div class="t" style="left:1349px;font-size:12.3px;color:#b4b8bf;top:1001px;line-height:20px;height:20px;font-size:12.4px">.clang-tidy</div>
<svg style="left:1421px;top:1002px" width="16" height="16" viewBox="0 0 16 16"><path d="M8 1L11 3.4L15 3.2L13.2 7.5L15 11.8L10.8 12.1L8 14.6L5.2 12.1L1 11.8L2.8 7.5L1 3.2L5 3.4Z" fill="none" stroke="#8f6af0" stroke-width="1.6" stroke-linejoin="round"/><path d="M5 3.4L10.8 12.1M11 3.4L5.2 12.1M2.8 7.5H13.2" stroke="#b49af5" stroke-width="1.2"/></svg>
<div class="a" style="left:1454px;top:1003px;width:6.5px;height:6.5px;background:#f35325"></div>
<div class="a" style="left:1461.5px;top:1003px;width:6.5px;height:6.5px;background:#81bc06"></div>
<div class="a" style="left:1454px;top:1010.5px;width:6.5px;height:6.5px;background:#05a6f0"></div>
<div class="a" style="left:1461.5px;top:1010.5px;width:6.5px;height:6.5px;background:#ffba08"></div>
<div class="t" style="left:1485px;font-size:12.3px;color:#b4b8bf;top:1001px;line-height:20px;height:20px;font-size:11.2px">CRLF</div>
<div class="t" style="left:1530px;font-size:12.3px;color:#b4b8bf;top:1001px;line-height:20px;height:20px;font-size:11.6px">UTF-8</div>
<div class="t" style="left:1579px;font-size:12.3px;color:#b4b8bf;top:1001px;line-height:20px;height:20px;font-size:12px">4 个空格*</div>
<div class="t" style="left:1644px;font-size:12.3px;color:#b4b8bf;top:1001px;line-height:20px;height:20px;font-size:12.1px;color:#868a91">C | src_day08_ArrayDemo3_c | Debug</div>
<svg style="left:1868px;top:1004px" width="14" height="13" viewBox="0 0 14 13"><rect x="0.5" y="6" width="9" height="6.5" fill="#5fb865"/><path d="M7.5 6V3.5C7.5 1.8 8.7 0.7 10.2 0.7S12.9 1.8 12.9 3.5V5" fill="none" stroke="#5fb865" stroke-width="1.4"/></svg>
</div>
</body></html>
